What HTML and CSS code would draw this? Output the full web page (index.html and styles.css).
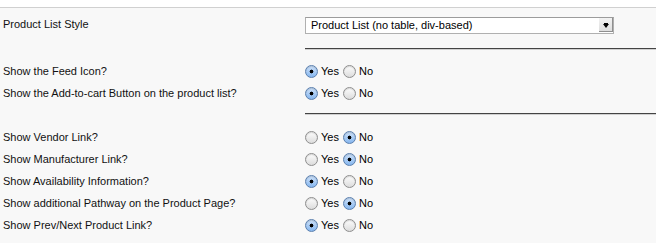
FILE: index.html
```html
<!DOCTYPE html>
<html lang="en">
  <head>
    <meta charset="UTF-8" />
    <meta name="viewport" content="width=device-width, initial-scale=1.0" />
    <title>Product List Settings</title>
    <link rel="stylesheet" href="styles.css">
  </head>
  <body>
    <div class="top"></div>
    <form class="settings">
      <div class="row select-row">
        <label class="label">Product List Style</label>
        <div class="field">
          <div class="select">
            <span class="select-text">Product List (no table, div-based)</span>
            <span class="select-btn"><span class="arrow"></span></span>
          </div>
        </div>
      </div>
      <div class="row sep"><div></div><hr /></div>

      <div class="row">
        <label class="label">Show the Feed Icon?</label>
        <div class="field">
          <input type="radio" name="feed" checked /><span class="opt">Yes</span>
          <input type="radio" name="feed" /><span class="opt">No</span>
        </div>
      </div>
      <div class="row">
        <label class="label">Show the Add-to-cart Button on the product list?</label>
        <div class="field">
          <input type="radio" name="cart" checked /><span class="opt">Yes</span>
          <input type="radio" name="cart" /><span class="opt">No</span>
        </div>
      </div>
      <div class="row sep sep2"><div></div><hr /></div>

      <div class="row">
        <label class="label">Show Vendor Link?</label>
        <div class="field">
          <input type="radio" name="vendor" /><span class="opt">Yes</span>
          <input type="radio" name="vendor" checked /><span class="opt">No</span>
        </div>
      </div>
      <div class="row">
        <label class="label">Show Manufacturer Link?</label>
        <div class="field">
          <input type="radio" name="manu" /><span class="opt">Yes</span>
          <input type="radio" name="manu" checked /><span class="opt">No</span>
        </div>
      </div>
      <div class="row">
        <label class="label">Show Availability Information?</label>
        <div class="field">
          <input type="radio" name="avail" checked /><span class="opt">Yes</span>
          <input type="radio" name="avail" /><span class="opt">No</span>
        </div>
      </div>
      <div class="row">
        <label class="label">Show additional Pathway on the Product Page?</label>
        <div class="field">
          <input type="radio" name="path" /><span class="opt">Yes</span>
          <input type="radio" name="path" checked /><span class="opt">No</span>
        </div>
      </div>
      <div class="row">
        <label class="label">Show Prev/Next Product Link?</label>
        <div class="field">
          <input type="radio" name="prevnext" checked /><span class="opt">Yes</span>
          <input type="radio" name="prevnext" /><span class="opt">No</span>
        </div>
      </div>
    </form>
  </body>
</html>
```

FILE: styles.css
```css
body {
  margin: 0;
  background-color: #f8f8f8;
  font-family: "Liberation Sans", Arial, sans-serif;
  font-size: 11px;
  color: #000;
}

.top {
  height: 7px;
  background-color: #fff;
  border-bottom: 1px solid #d0d0d0;
}

.settings {
  margin: 0;
}

.row {
  display: grid;
  grid-template-columns: 305px 1fr;
  height: 22px;
  align-items: center;
}

.label {
  padding-left: 3px;
  font-size: 11px;
  color: #111;
}

.select-row {
  height: auto;
  align-items: start;
  padding-top: 9px;
}

.select-row .label {
  line-height: 14px;
}

.select {
  display: flex;
  width: 307px;
  height: 15px;
  border: 1px solid #b0b0b0;
  border-top-color: #9c9c9c;
  background-color: #fff;
}

.select-text {
  flex: 1;
  padding-left: 5px;
  line-height: 15px;
}

.select-btn {
  width: 14px;
  height: 14px;
  margin: 0 0 1px 1px;
  background: linear-gradient(#f2f2f2, #dedede);
  border-right: 1px solid #8f8f8f;
  border-bottom: 1px solid #8f8f8f;
  box-sizing: border-box;
  display: flex;
  align-items: center;
  justify-content: center;
}

.arrow {
  width: 0;
  height: 0;
  margin-top: 2px;
  border-left: 3px solid transparent;
  border-right: 3px solid transparent;
  border-top: 4px solid #000;
  box-shadow: 0 -2px 0 -1px #000;
}

.sep {
  height: auto;
  padding-top: 14px;
  padding-bottom: 10px;
}

.sep2 {
  padding-top: 9px;
  padding-bottom: 11px;
}

hr {
  margin: 0;
  border: none;
  border-top: 1px solid #444;
  border-bottom: 1px solid #d0d0d0;
  height: 0;
}

.field {
  display: flex;
  align-items: center;
}

input[type="radio"] {
  appearance: none;
  -webkit-appearance: none;
  width: 13px;
  height: 13px;
  margin: 0 3px 0 0;
  border-radius: 50%;
  border: 1px solid #8e8e8e;
  box-sizing: border-box;
  background: linear-gradient(#fdfdfd, #dcdcdc);
  box-shadow: inset 0 1px 1px rgba(0, 0, 0, 0.15);
}

input[type="radio"]:checked {
  border-color: #5a7fae;
  background:
    radial-gradient(circle, #000 0 1.6px, transparent 2.2px),
    linear-gradient(#cfe3fb, #86b6ee);
}

.opt {
  margin-right: 4px;
  font-size: 11px;
}
```
